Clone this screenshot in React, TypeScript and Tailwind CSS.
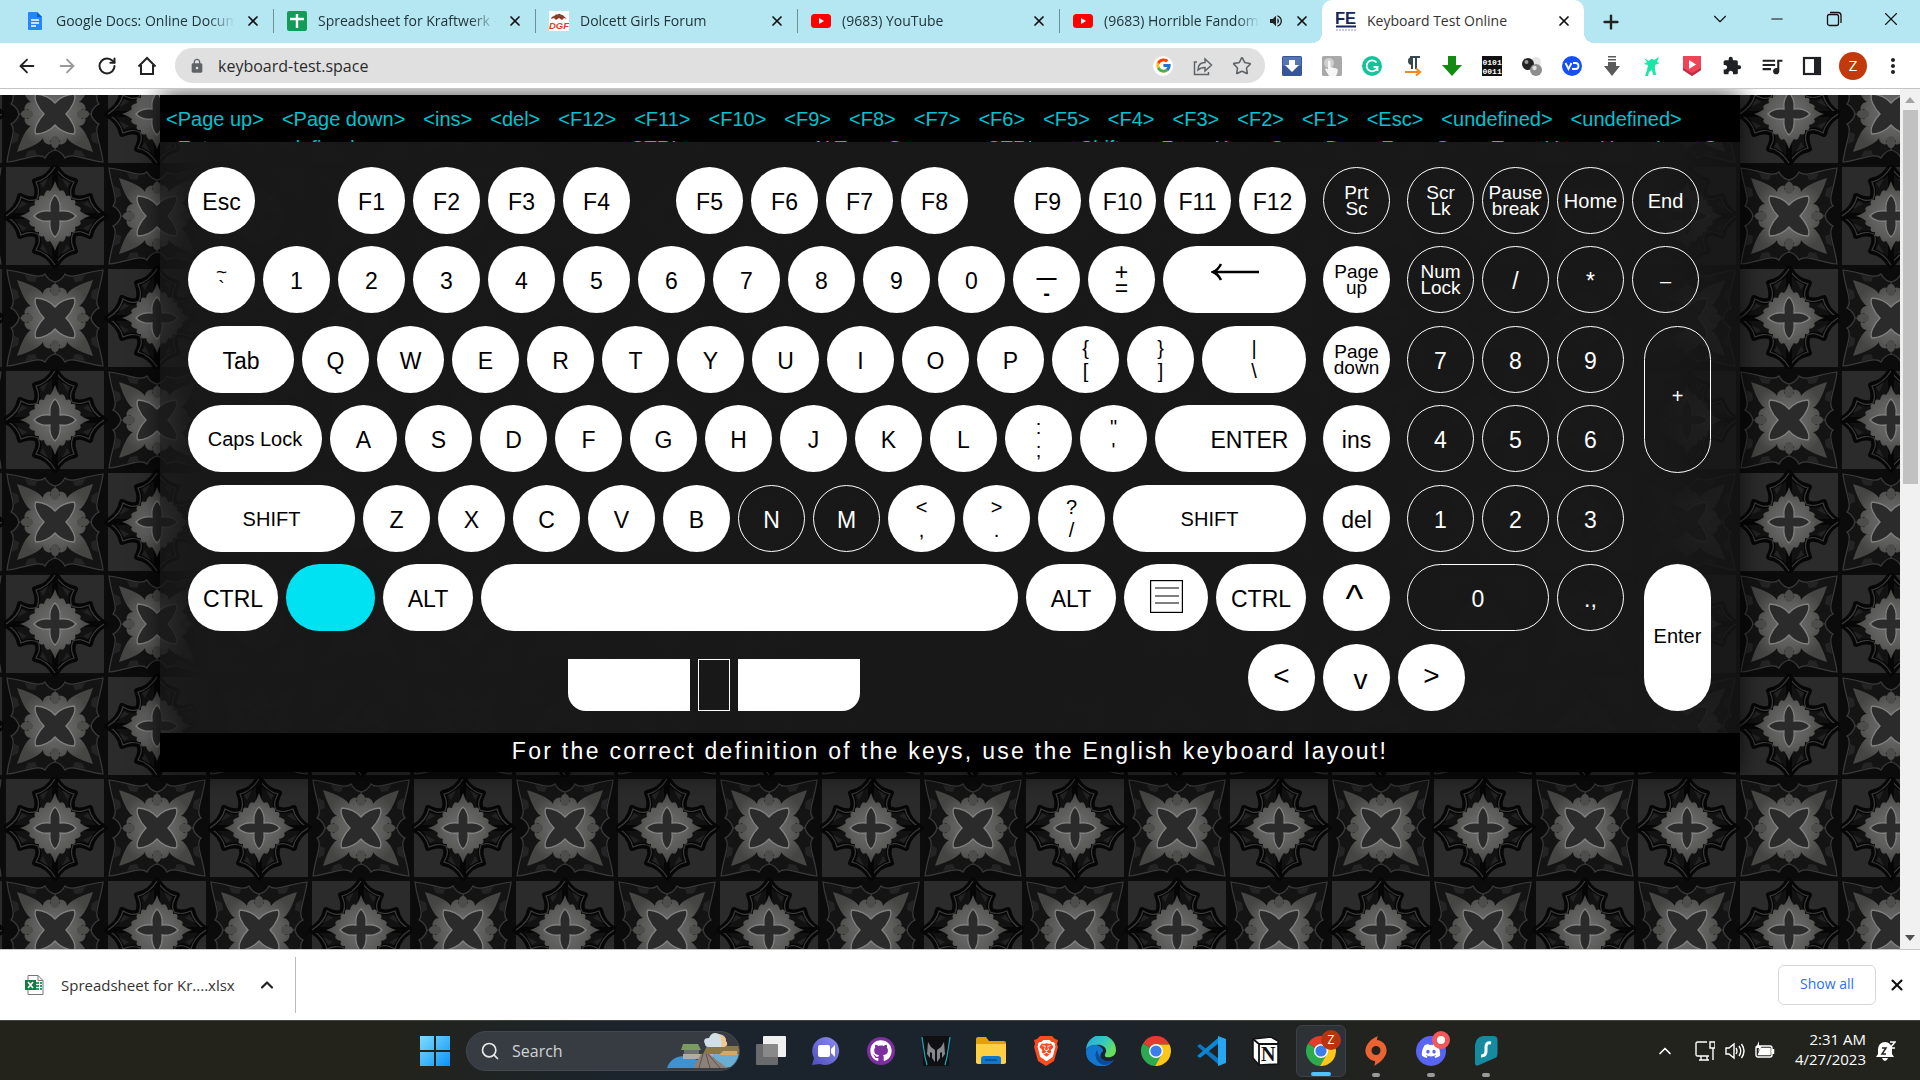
import React from "react";
import { ArrowLeft, ArrowRight, ChevronDown, ChevronUp, Minus, Plus, RotateCw, Search, Star, X } from "lucide-react";
import { FcGoogle } from "react-icons/fc";
import { FaDiscord, FaGithub } from "react-icons/fa";
import { MdExtension, MdLock, MdMoreVert, MdQueueMusic, MdVolumeUp } from "react-icons/md";
import { SiBrave } from "react-icons/si";

/* ---------- favicons ---------- */

const DocsIcon = () => (
  <svg viewBox="0 0 18 20" className="h-5 w-[18px]">
    <path d="M3 1h8l5 5v12a1 1 0 0 1-1 1H3a1 1 0 0 1-1-1V2a1 1 0 0 1 1-1z" fill="#2684fc" />
    <path d="M11 1l5 5h-5z" fill="#0f5bc9" />
    <path d="M5 9h8M5 12h8M5 15h5" stroke="#fff" strokeWidth="1.3" />
  </svg>
);
const SheetsIcon = () => (
  <svg viewBox="0 0 20 20" className="size-5">
    <rect width="20" height="20" rx="2" fill="#0f9d58" />
    <path d="M10 3v14M3 8h14" stroke="#fff" strokeWidth="2.4" />
  </svg>
);
const ForumIcon = () => (
  <svg viewBox="0 0 20 20" className="size-5">
    <rect width="20" height="20" fill="#fff" />
    <path d="M2 8c1-4 4-2 5-5 2 2 3-2 5 1 2-1 3 2 6 4l-3-1-2 2-3-2-3 2-2-2z" fill="#8a3b2c" />
    <text x="0" y="18" fontFamily="Liberation Sans" fontWeight="bold" fontStyle="italic" fontSize="9.5" fill="#e23b2e">DGF</text>
  </svg>
);
const YoutubeIcon = () => (
  <svg viewBox="0 0 20 14" className="h-3.5 w-5">
    <rect width="20" height="14" rx="3.5" fill="#f00" />
    <path d="M8 4v6l5-3z" fill="#fff" />
  </svg>
);
const FeIcon = () => (
  <svg viewBox="0 0 20 20" className="size-5">
    <text x="-1" y="13" fontFamily="Liberation Sans" fontWeight="bold" fontSize="16.5" fill="#14275a">FE</text>
    <path d="M0 15.5h20" stroke="#14275a" strokeWidth="2" />
    <path d="M0 19h20" stroke="#8c97b8" strokeWidth="1" strokeDasharray="2 1" />
  </svg>
);

type TabInfo = { title: string; icon: React.ReactNode; audio?: boolean };
const tabs: TabInfo[] = [
  { title: "Google Docs: Online Document Editor", icon: <DocsIcon /> },
  { title: "Spreadsheet for Kraftwerk - Google", icon: <SheetsIcon /> },
  { title: "Dolcett Girls Forum", icon: <ForumIcon /> },
  { title: "(9683) YouTube", icon: <YoutubeIcon /> },
  { title: "(9683) Horrible Fandoms", icon: <YoutubeIcon />, audio: true },
];

function TabStrip() {
  return (
    <div className="flex h-[43px] shrink-0 bg-[#b5e7f2] pl-3">
      {tabs.map((t, i) => (
        <div key={t.title} className="flex w-[262px] items-center pb-0.5">
          <div className={i < 4 ? "flex h-6 w-full items-center border-r border-[#6f8f97] pl-[13px] pr-3" : "flex h-6 w-full items-center pl-[13px] pr-3"}>
            <span className="flex w-5 justify-center">{t.icon}</span>
            <span className="ml-[11px] flex-1 overflow-hidden whitespace-nowrap text-sm text-[#22353a] [mask-image:linear-gradient(to_right,black_85%,transparent)]">
              {t.title}
            </span>
            {t.audio && <MdVolumeUp className="ml-2 size-4 text-[#222]" />}
            <button aria-label={"Close " + t.title} className="ml-2.5">
              <X className="size-4 text-[#111]" strokeWidth={2.6} />
            </button>
          </div>
        </div>
      ))}
      <div className="relative flex w-[262px] items-center rounded-t-[10px] bg-white pb-0.5 pl-3.5 pr-3">
        <span className="absolute -left-2.5 bottom-0 size-2.5 bg-[radial-gradient(circle_at_0_0,transparent_10px,white_10px)]" />
        <span className="absolute -right-2.5 bottom-0 size-2.5 bg-[radial-gradient(circle_at_100%_0,transparent_10px,white_10px)]" />
        <FeIcon />
        <span className="ml-[11px] flex-1 whitespace-nowrap text-sm text-[#333]">Keyboard Test Online</span>
        <button aria-label="Close tab"><X className="size-4 text-[#111]" strokeWidth={2.6} /></button>
      </div>
      <button aria-label="New tab" className="ml-4"><Plus className="size-[22px] text-[#222]" strokeWidth={2.6} /></button>
      <div className="ml-auto flex items-center gap-[35px] pb-1.5 pr-[18px] text-[#111]">
        <button aria-label="Search tabs"><ChevronDown className="size-[22px]" strokeWidth={1.2} /></button>
        <button aria-label="Minimize" className="px-0.5"><Minus className="size-[18px]" strokeWidth={1.4} /></button>
        <button aria-label="Restore" className="px-0.5">
          <svg viewBox="0 0 18 18" className="size-[18px]" fill="none" stroke="currentColor" strokeWidth="1.3">
            <rect x="2.5" y="4.5" width="11" height="11" rx="2" />
            <path d="M5 2.5h8a3 3 0 0 1 3 3V13" />
          </svg>
        </button>
        <button aria-label="Close window"><X className="size-[22px]" strokeWidth={1.2} /></button>
      </div>
    </div>
  );
}

/* ---------- toolbar ---------- */

const extensions: { name: string; art: React.ReactNode }[] = [
  { name: "Downloader", art: (<><rect x="0" y="0" width="20" height="20" rx="1.5" fill="#36559b" /><rect x="1" y="1" width="18" height="9" fill="#5574b4" /><path d="M7 4h6v5h4l-7 7-7-7h4z" fill="#fff" /></>) },
  { name: "Click tool", art: (<><rect width="20" height="20" rx="1.5" fill="#a9a9a9" /><circle cx="7" cy="7" r="5" fill="#cfcfcf" /><path d="M6 5c1-1.500 2.500-.5 2.500 1v5l6 1.500c1.500.5 1.500 2 1 4L14 20H7l-4-7c1-1 2-.5 3 .5z" fill="#f6f6f6" /></>) },
  { name: "Grammar", art: (<><circle cx="10" cy="10" r="10" fill="#15c39a" /><path d="M14.500 6.500A5.500 5.500 0 1 0 15.500 11h-4M15.500 11v4" fill="none" stroke="#fff" strokeWidth="1.800" /></>) },
  { name: "Paragraph", art: (<><path d="M8 1h10M10 1v12M14 1v12" stroke="#37474f" strokeWidth="2" /><path d="M10 1a4 4 0 1 0 0 8z" fill="#37474f" /><path d="M3 16h14M14 12.500l4 3.500-4 3.500" fill="none" stroke="#f58a1f" strokeWidth="2.200" /></>) },
  { name: "Green arrow", art: <path d="M6 0h8v9h6L10 20 0 9h6z" fill="#148a12" /> },
  { name: "Binary", art: (<><rect width="20" height="20" fill="#111" /><text x="0.500" y="9" fontFamily="Liberation Mono" fontWeight="bold" fontSize="8" fill="#fff">0101</text><text x="0.500" y="18" fontFamily="Liberation Mono" fontWeight="bold" fontSize="8" fill="#fff">0011</text></>) },
  { name: "Spheres", art: (<><circle cx="14" cy="6" r="5" fill="#e4e4e4" /><circle cx="6" cy="8" r="6" fill="#222" /><circle cx="4.500" cy="6" r="2" fill="#999" /><circle cx="14" cy="14" r="6" fill="#8d8d8d" /><circle cx="12.500" cy="12" r="2.200" fill="#ddd" /></>) },
  { name: "Video", art: (<><circle cx="10" cy="10" r="10" fill="#1450f5" /><path d="M3.500 7l3 6 3-6M11 7h2.500a3 3 0 0 1 0 6H10" fill="none" stroke="#fff" strokeWidth="1.800" /></>) },
  { name: "Grey arrow", art: (<path d="M6 0h8v1.500H6zM6 3h8v1.500H6zM6 6h8v4h4l-8 10L2 10h4z" fill="#5a5a5a" />) },
  { name: "Runner", art: (<path d="M2 2l5 3c1-2 4-3 5-1l5-3-2 5 3 1-5 2v4l1 6h-3l-1-5-3 2-1 4H3l2-6 1-5-4-1 3-2z" fill="#19e6a8" />) },
  { name: "Shield player", art: (<><path d="M1 0h18v14l-9 6-9-6z" fill="#ee4455" /><path d="M1 14l9 6 9-6v-2l-9 5-9-5z" fill="#c12d44" /><path d="M7 4v9l7-4.500z" fill="#fff" /></>) },
];

function Toolbar() {
  return (
    <div className="flex h-[46px] shrink-0 items-center border-b border-[#c4c4c4] bg-white pl-4 pr-[15px]">
      <div className="flex gap-[18px] text-[#222]">
        <button aria-label="Back"><ArrowLeft className="size-[22px]" /></button>
        <button aria-label="Forward"><ArrowRight className="size-[22px] text-[#999]" /></button>
        <button aria-label="Reload"><RotateCw className="size-[22px] p-px" strokeWidth={2.4} /></button>
        <button aria-label="Home">
          <svg viewBox="0 0 22 22" className="size-[22px]" fill="none" stroke="currentColor" strokeWidth="2"><path d="M2.500 11.500L11 3l8.500 8.500M5 10v9h12v-9" /></svg>
        </button>
      </div>
      <div className="ml-[17px] flex h-[35px] flex-1 items-center rounded-full bg-[#e0e0e0] pl-3.5 pr-[13px] text-[#5f6368]">
        <MdLock className="size-4" />
        <input aria-label="Address" defaultValue="keyboard-test.space" className="ml-[13px] min-w-0 flex-1 bg-transparent text-base text-[#2b2b2b] outline-none" />
        <span className="flex size-5 items-center justify-center rounded-full bg-white"><FcGoogle className="size-[17px]" /></span>
        <button aria-label="Share" className="ml-5">
          <svg viewBox="0 0 20 20" className="size-5" fill="none" stroke="currentColor" strokeWidth="1.500"><path d="M4 6H1.500v12.500h14V16M5 14c0-5 3-7.500 7-7.500V3l6.500 6-6.500 6v-3.500c-3 0-5 .5-7 2.500z" /></svg>
        </button>
        <button aria-label="Bookmark" className="ml-[19px]"><Star className="size-5" strokeWidth={1.900} /></button>
      </div>
      <div className="ml-[17px] flex items-center gap-5 text-[#202124]">
        {extensions.map((e) => (
          <button key={e.name} aria-label={e.name}><svg viewBox="0 0 20 20" className="size-5">{e.art}</svg></button>
        ))}
        <button aria-label="Extensions"><MdExtension className="size-5" /></button>
        <button aria-label="Media"><MdQueueMusic className="size-5 scale-125" /></button>
        <button aria-label="Side panel">
          <svg viewBox="0 0 20 20" className="size-5"><rect x="2" y="2" width="16" height="16" fill="none" stroke="currentColor" strokeWidth="2.200" /><rect x="12" y="2" width="6" height="16" fill="currentColor" /></svg>
        </button>
      </div>
      <button aria-label="Profile" className="ml-[17px] flex size-7 items-center justify-center rounded-full bg-[#c23a0c] text-[15px] text-white">Z</button>
      <button aria-label="Menu" className="ml-3.5"><MdMoreVert className="size-6 text-[#202124]" /></button>
    </div>
  );
}

/* ---------- tiled backdrop ---------- */

const quarter = [0, 90, 180, 270];

function Backdrop() {
  return (
    <svg className="absolute inset-x-0 bottom-0 top-1.5 h-[calc(100%-6px)] w-full" aria-hidden="true">
      <defs>
        <radialGradient id="glow"><stop offset="0" stopColor="#707070" /><stop offset="0.6" stopColor="#5c5c5b" /><stop offset="1" stopColor="#454544" /></radialGradient>
        <g id="plusCell">
          <rect x="-51" y="-51" width="102" height="102" fill="#2b2b2b" stroke="#0c0c0c" strokeWidth="4" />
          {quarter.map((r) => (
            <g key={r} transform={`rotate(${r})`}>
              <path d="M0 0L0-50C5-42 10-37 20-35C17-29 15-24 18-19C24-16 30-18 35-20C37-10 42-5 50 0Z" fill="#121212" stroke="#060606" strokeWidth="6" strokeLinejoin="round" />
              <path d="M0-49C5-41 10-36 19-34C16-28 14-24 17-18C24-15 29-17 34-19C36-10 41-5 49 0" fill="none" stroke="#3a3a3a" strokeWidth="1.200" />
              <path d="M7-38L15-33L12-28ZM38-7L33-15L28-12Z" fill="#222" />
            </g>
          ))}
          <path d="M0-35C2-30 3-27 5-25Q9-28 11-20Q17-22 16-16Q22-17 20-11Q28-9 25-5C27-3 30-2 35 0C30 2 27 3 25 5Q28 9 20 11Q22 17 16 16Q17 22 11 20Q9 28 5 25C3 27 2 30 0 35C-2 30-3 27-5 25Q-9 28-11 20Q-17 22-16 16Q-22 17-20 11Q-28 9-25 5C-27 3-30 2-35 0C-30-2-27-3-25-5Q-28-9-20-11Q-22-17-16-16Q-17-22-11-20Q-9-28-5-25C-3-27-2-30 0-35Z" fill="url(#glow)" />
          <path d="M0-21C4-18 6-11 5-5C11-6 18-4 21 0C18 4 11 6 5 5C6 11 4 18 0 21C-4 18-6 11-5 5C-11 6-18 4-21 0C-18-4-11-6-5-5C-6-11-4-18 0-21Z" fill="#2b2b2b" stroke="#808080" strokeWidth="1.300" />
        </g>
        <g id="crossCell">
          <rect x="-51" y="-51" width="102" height="102" fill="#0b0b0b" />
          {quarter.map((r) => (
            <g key={r} transform={`rotate(${r})`}>
              <path d="M0 0L0-36C4-37 8-40 10-44C16-38 30-46 48-48C46-30 38-16 44-10C40-8 37-4 36 0Z" fill="#141414" stroke="#3a3a3a" strokeWidth="1.200" />
              <path d="M18-41L30-43L27-37L20-36ZM41-18L43-30L37-27L36-20Z" fill="#242424" />
            </g>
          ))}
          <path d="M0-24Q3-24 5-27Q2-32 8-30Q12-28 12-24Q16-31 38-38Q31-16 24-12Q28-12 30-8Q32-2 27-5Q24-3 24 0Q24 3 27 5Q32 2 30 8Q28 12 24 12Q31 16 38 38Q16 31 12 24Q12 28 8 30Q2 32 5 27Q3 24 0 24Q-3 24-5 27Q-2 32-8 30Q-12 28-12 24Q-16 31-38 38Q-31 16-24 12Q-28 12-30 8Q-32 2-27 5Q-24 3-24 0Q-24-3-27-5Q-32-2-30-8Q-28-12-24-12Q-31-16-38-38Q-16-31-12-24Q-12-28-8-30Q-2-32-5-27Q-3-24 0-24Z" fill="url(#glow)" />
          {quarter.map((r) => (
            <path key={r} transform={`rotate(${r})`} d="M0-22C4-22 5-26 4-30Q3-34 0-34Q-3-34-4-30C-5-26-4-22 0-22Z" fill="#4d4d4c" />
          ))}
          <path d="M0-11C4-16 12-20 19-20C22-16 17-6 11 0C17 6 22 16 19 20C12 20 4 16 0 11C-4 16-12 20-19 20C-22 16-17 6-11 0C-17-6-22-16-19-20C-12-20-4-16 0-11Z" fill="#2b2b2b" stroke="#808080" strokeWidth="1.300" />
        </g>
        <pattern id="tiles" x="4" y="70" width="204" height="204" patternUnits="userSpaceOnUse">
          <use href="#crossCell" x="153" y="51" />
          <use href="#crossCell" x="51" y="153" />
          <use href="#plusCell" x="51" y="51" />
          <use href="#plusCell" x="153" y="153" />
        </pattern>
      </defs>
      <rect width="100%" height="100%" fill="url(#tiles)" />
    </svg>
  );
}

/* ---------- keyboard ---------- */

type KeyProps = { w?: string; h?: string; off?: boolean; size?: string; pad?: string; label?: string; children?: React.ReactNode };
function Key({ w = "w-[67px]", h = "h-[67px]", off, size = "text-[23px]", pad = "pt-[3px]", label, children }: KeyProps) {
  const tone = off ? "border border-white text-white" : "bg-white text-black";
  return (
    <button aria-label={label} className={`flex shrink-0 items-center justify-center rounded-full text-center ${w} ${h} ${size} ${pad} ${tone}`}>
      {children}
    </button>
  );
}

const Letters = ({ keys }: { keys: string[] }) => (<>{keys.map((k) => <Key key={k} off={k === "N" || k === "M"}>{k}</Key>)}</>);

function Pair({ a, b, w, tight, off, label }: { a: string; b: string; w?: string; tight?: boolean; off?: boolean; label?: string }) {
  return (
    <Key w={w} off={off} size={tight ? "text-[19px] leading-4" : "text-xl leading-[23px]"} pad="p-0" label={label}>
      <span>{a}<br />{b}</span>
    </Key>
  );
}

function Row({ main, nav, pad, gap = "mt-3" }: { main: React.ReactNode; nav: React.ReactNode; pad: React.ReactNode; gap?: string }) {
  return (
    <div className={`flex ${gap}`}>
      <div className="flex w-[1118px] gap-2">{main}</div>
      <div className="ml-[17px]">{nav}</div>
      <div className="ml-[17px] flex gap-2">{pad}</div>
    </div>
  );
}

function Keyboard() {
  return (
    <div className="flex gap-2 pb-[22px] pl-7 pt-[25px]">
      <div className="flex flex-col">
        <Row
          gap="mt-0"
          main={
            <>
              <Key>Esc</Key>
              <div className="ml-[75px] flex gap-2"><Letters keys={["F1", "F2", "F3", "F4"]} /></div>
              <div className="mx-auto flex gap-2"><Letters keys={["F5", "F6", "F7", "F8"]} /></div>
              <div className="flex gap-2"><Letters keys={["F9", "F10", "F11", "F12"]} /></div>
            </>
          }
          nav={<Pair a="Prt" b="Sc" tight off />}
          pad={<><Pair a="Scr" b="Lk" tight off /><Pair a="Pause" b="break" tight off /><Key off size="text-xl" pad="p-0">Home</Key></>}
        />
        <Row
          main={
            <>
              <Pair a="~" b="`" tight />
              <Letters keys={["1", "2", "3", "4", "5", "6", "7", "8", "9", "0"]} />
              <Key size="text-xl leading-4" pad="pt-2.5" label="Minus"><b>—<br />-</b></Key>
              <Key size="text-[23px] leading-4" pad="p-0"><span>+<br />=</span></Key>
              <Key w="flex-1" label="Backspace" pad="pb-4">
                <svg viewBox="0 0 48 18" className="h-[18px] w-12" fill="none" stroke="currentColor" strokeWidth="2.500"><path d="M48 9H2M10 1Q7 7 2 9Q7 11 10 17" /></svg>
              </Key>
            </>
          }
          nav={<Pair a="Page" b="up" tight />}
          pad={<><Pair a="Num" b="Lock" tight off /><Key off>/</Key><Key off>*</Key></>}
        />
        <Row
          gap="mt-[13px]"
          main={
            <>
              <Key w="w-[106px]">Tab</Key>
              <Letters keys={["Q", "W", "E", "R", "T", "Y", "U", "I", "O", "P"]} />
              <Pair a="{" b="[" /><Pair a="}" b="]" /><Pair a="|" b="\" w="flex-1" />
            </>
          }
          nav={<Pair a="Page" b="down" tight />}
          pad={<><Key off>7</Key><Key off>8</Key><Key off>9</Key></>}
        />
        <Row
          main={
            <>
              <Key w="w-[134px]" size="text-xl" pad="p-0">Caps Lock</Key>
              <Letters keys={["A", "S", "D", "F", "G", "H", "J", "K", "L"]} />
              <Pair a=":" b=";" /><Pair a={'"'} b="'" />
              <Key w="flex-1" pad="pl-[38px] pt-[3px]">ENTER</Key>
            </>
          }
          nav={<Key>ins</Key>}
          pad={<><Key off>4</Key><Key off>5</Key><Key off>6</Key></>}
        />
        <Row
          gap="mt-[13px]"
          main={
            <>
              <Key w="w-[167px]" size="text-xl" pad="p-0">SHIFT</Key>
              <Letters keys={["Z", "X", "C", "V", "B", "N", "M"]} />
              <Pair a="<" b="," /><Pair a=">" b="." /><Pair a="?" b="/" />
              <Key w="flex-1" size="text-xl" pad="p-0">SHIFT</Key>
            </>
          }
          nav={<Key>del</Key>}
          pad={<><Key off>1</Key><Key off>2</Key><Key off>3</Key></>}
        />
        <Row
          main={
            <>
              <Key w="w-[90px]">CTRL</Key>
              <button aria-label="Windows" className="h-[67px] w-[89px] rounded-full bg-[#00e2f2]" />
              <Key w="w-[90px]">ALT</Key>
              <Key w="flex-1" label="Space" />
              <Key w="w-[90px]">ALT</Key>
              <Key w="w-[84px]" label="Menu" pad="pb-0.5">
                <svg viewBox="0 0 33 33" className="size-[33px]" fill="none" stroke="currentColor" strokeWidth="1.200"><rect x="0.600" y="0.600" width="31.800" height="31.800" /><path d="M5 8h24M5 16h24M5 23h24" /></svg>
              </Key>
              <Key w="w-[90px]">CTRL</Key>
            </>
          }
          nav={<Key size="text-[38px] leading-none" pad="pt-[3px] pr-1">^</Key>}
          pad={<><Key w="w-[142px]" off>0</Key><Key off>.,</Key></>}
        />
        <div className="mt-[13px] flex items-end pl-[380px] pr-[159px]">
          <div className="flex gap-2">
            <button aria-label="Left button" className="h-[52px] w-[122px] rounded-bl-[18px] bg-white" />
            <button aria-label="Wheel" className="h-[52px] w-8 border border-white" />
            <button aria-label="Right button" className="h-[52px] w-[122px] rounded-br-[18px] bg-white" />
          </div>
          <div className="ml-auto flex gap-2">
            <Key size="text-[28px]" pad="pb-1">&lt;</Key>
            <Key size="text-[28px]" pad="pl-2 pt-1">v</Key>
            <Key size="text-[28px]" pad="pb-1">&gt;</Key>
          </div>
        </div>
      </div>
      <div className="flex w-[79px] flex-col">
        <Key off size="text-xl" pad="p-0">End</Key>
        <div className="mt-3"><Key off size="text-xl">–</Key></div>
        <div className="mt-[13px] self-end"><Key off h="h-[147px]" size="text-xl" pad="pb-2">+</Key></div>
        <div className="mt-[91px] self-end"><Key h="h-[147px]" size="text-xl" pad="pb-1">Enter</Key></div>
      </div>
    </div>
  );
}

const recent = ["Page up", "Page down", "ins", "del", "F12", "F11", "F10", "F9", "F8", "F7", "F6", "F5", "F4", "F3", "F2", "F1", "Esc", "undefined", "undefined"];
const older: [string, string][] = [
  ["Enter", ""], ["undefined", ""], ["CTRL", "ml-[234px]"], ["ALT", "ml-[88px]"], ["Space", ""], ["CTRL", ""], ["Shift", ""],
  ["Z", ""], ["X", ""], ["C", ""], ["D", ""], ["F", ""], ["G", ""], ["T", ""], ["Y", ""], ["U", ""], ["I", ""], ["O", ""],
];

function Page() {
  return (
    <div className="relative flex min-h-0 flex-1 overflow-hidden bg-white">
      <main className="relative min-w-0 flex-1 overflow-hidden pt-1.5 font-['Liberation_Sans',Arial,sans-serif]">
        <Backdrop />
        <div className="relative mx-auto w-[1580px] shadow-[0_0_24px_rgba(0,0,0,0.75)]">
          <div className="h-[47px] overflow-hidden whitespace-nowrap bg-black pl-1.5 pt-2.5 text-xl leading-[29px] text-[#00c3cf]">
            <div className="flex gap-[18px]">{recent.map((k, i) => <span key={i}>{"<" + k + ">"}</span>)}</div>
            <div className="flex gap-[18px]">{older.map(([k, m], i) => <span key={i} className={m}>{"<" + k + ">"}</span>)}</div>
          </div>
          <div className="bg-[linear-gradient(to_right,rgba(22,22,22,0.75),rgba(24,24,24,0.98)_40px,rgb(24,24,24)_50%,rgba(24,24,24,0.98)_calc(100%-70px),rgba(20,20,20,0.8))]">
            <Keyboard />
          </div>
          <p className="bg-black pb-[3px] text-center text-[23px] leading-9 tracking-widest text-white">
            For the correct definition of the keys, use the English keyboard layout!
          </p>
        </div>
      </main>
      <div className="flex w-5 shrink-0 flex-col items-center bg-[#f1f1f1] py-2">
        <svg viewBox="0 0 10 6" className="h-1.5 w-2.5"><path d="M0 6l5-6 5 6z" fill="#a3a3a3" /></svg>
        <div className="mt-[7px] h-[374px] w-[15px] bg-[#c1c1c1]" />
        <svg viewBox="0 0 10 6" className="mt-auto h-1.5 w-2.5"><path d="M0 0l5 6 5-6z" fill="#505050" /></svg>
      </div>
    </div>
  );
}

/* ---------- download shelf ---------- */

function Downloads() {
  return (
    <div className="flex h-[71px] shrink-0 items-center border-t border-[#c8c8c8] bg-white">
      <div className="flex h-14 items-center border-r border-[#bbb] pl-[25px] pr-[18px]">
        <svg viewBox="0 0 20 20" className="size-5">
          <path d="M3 .5h10l5 5v14H3z" fill="#fff" stroke="#777" />
          <path d="M13 .5v5h5" fill="none" stroke="#777" />
          <path d="M11 8h3M15 8h2M11 11h3M15 11h2M11 14h3M15 14h2" stroke="#21a366" strokeWidth="1.800" />
          <rect y="5" width="11" height="10" fill="#107c41" />
          <path d="M3 7l5 6M8 7l-5 6" stroke="#fff" strokeWidth="1.600" />
        </svg>
        <span className="ml-4 w-[176px] whitespace-nowrap text-[15px] text-[#333]">Spreadsheet for Kr....xlsx</span>
        <button aria-label="File options" className="ml-5"><ChevronUp className="size-5 text-[#222]" strokeWidth={2.600} /></button>
      </div>
      <button className="ml-auto h-10 w-[98px] rounded-md border border-[#d5d7da] pb-0.5 text-sm font-medium text-[#2a6fee]">Show all</button>
      <button aria-label="Close downloads" className="ml-3 mr-3.5"><X className="size-[18px] text-[#111]" strokeWidth={2.800} /></button>
    </div>
  );
}

/* ---------- taskbar ---------- */

const ChromeLogo = () => (
  <svg viewBox="0 0 30 30" className="size-[30px]">
    <path d="M15 15L2 7.500A15 15 0 0 1 28 7.500L28.500 8.500H15z" fill="#e33b2e" />
    <path d="M15 15L2 7.500A15 15 0 0 0 14 30L21 19z" fill="#2da94f" />
    <path d="M15 8.500H28.500A15 15 0 0 1 14 30L21 18z" fill="#fdc61a" />
    <circle cx="15" cy="15" r="7" fill="#fff" />
    <circle cx="15" cy="15" r="5.600" fill="#3b7ded" />
  </svg>
);

const apps: { name: string; art: React.ReactNode }[] = [
  { name: "Task view", art: <svg viewBox="0 0 30 30" className="size-[30px]"><rect x="7" y="0" width="23" height="21" rx="1" fill="#f0f0f0" /><rect x="0" y="8" width="22" height="21" rx="1" fill="#777" fillOpacity="0.850" /></svg> },
  { name: "Chat", art: <svg viewBox="0 0 30 30" className="size-[30px]"><defs><linearGradient id="chat" x1="0" y1="1" x2="1" y2="0"><stop offset="0" stopColor="#4e4fb8" /><stop offset="1" stopColor="#8d8df0" /></linearGradient></defs><path d="M15 1a14 14 0 1 1-6 27L1 29l2-7A14 14 0 0 1 15 1z" fill="url(#chat)" /><rect x="7" y="9" width="12" height="12" rx="2" fill="#fff" /><path d="M20 13l4-4v12l-4-4z" fill="#fff" /></svg> },
  { name: "GitHub", art: <span className="flex size-7 items-center justify-center rounded-full bg-[#7d2fa0]"><FaGithub className="size-[22px] text-white" /></span> },
  { name: "Predator", art: <svg viewBox="0 0 30 30" className="size-[30px]"><path d="M2 0h26v30H2z" fill="#101012" /><path d="M1 1l3 20 2 8M29 1l-3 20-2 8" fill="none" stroke="#19a9bd" strokeWidth="1.200" /><path d="M7 6l3 5 4 3v12l-3-4v-5l-2-1v6l-3-4zM23 6l-3 5-4 3v12l3-4v-5l2-1v6l3-4z" fill="#85888d" /></svg> },
  { name: "Explorer", art: <svg viewBox="0 0 30 30" className="size-[30px]"><path d="M0 3q0-2 2-2h8l3 4h15q2 0 2 2v20H0z" fill="#e3a008" /><path d="M0 8h30v18q0 2-2 2H2q-2 0-2-2z" fill="#ffcf44" /><path d="M5 28v-5q0-3 3-3h14q3 0 3 3v5z" fill="#0f79cf" /><path d="M9 24h12" stroke="#0a4d8c" strokeWidth="1.500" /></svg> },
  { name: "Brave", art: <span className="relative flex size-[30px] items-center justify-center"><svg viewBox="0 0 30 30" className="absolute size-[30px]"><path d="M9 0h12l3 3 3 1-1 4 1 3-4 14-8 5-8-5L3 11l1-3-1-4 3-1z" fill="#fb4b1e" /></svg><SiBrave className="relative size-[21px] text-white" /></span> },
  { name: "Edge", art: <svg viewBox="0 0 30 30" className="size-[30px]"><defs><linearGradient id="edge" x1="0" y1="0" x2="1" y2="0.500"><stop offset="0" stopColor="#2aa7df" /><stop offset="0.600" stopColor="#35c9c0" /><stop offset="1" stopColor="#67e05a" /></linearGradient></defs><path d="M0 14A15 15 0 0 1 30 14c0 6-5 8-10 7-2-1-1-3 0-5 1-5-5-8-10-7C5 9 1 11 0 14z" fill="url(#edge)" /><path d="M0 15C1 10 8 7 13 10c4 2 5 5 3 6-4 4 0 11 7 10 2 0 4-1 5-2-6 9-18 7-22 3C1 24 0 19 0 15z" fill="#1177cf" /><path d="M11 14c-4 7 1 15 9 15 4-1 7-3 8-5-7 3-15 0-17-10z" fill="#0c4a9a" /></svg> },
  { name: "Chrome", art: <ChromeLogo /> },
  { name: "VS Code", art: <svg viewBox="0 0 30 30" className="size-[30px]"><path d="M1 10l3-2 19 15v6z" fill="#0f75bd" /><path d="M1 20l3 2L23 7V1z" fill="#0d86d4" /><path d="M22 0l8 3v24l-8 3z" fill="#27a7f2" /></svg> },
  { name: "Notion", art: <svg viewBox="0 0 30 30" className="size-[30px]"><path d="M2 3l18-2 7 4v23l-19 1-6-7z" fill="#fff" stroke="#111" strokeWidth="1.500" /><path d="M2 3l6 5h19M8 8v21" fill="none" stroke="#111" strokeWidth="1.800" /><text x="10" y="25" fontFamily="Liberation Serif" fontWeight="bold" fontSize="20" fill="#111">N</text></svg> },
];

function Taskbar() {
  return (
    <div className="flex h-[60px] shrink-0 items-center border-t border-[#40423c] bg-[linear-gradient(to_right,#23231b_0,#23231b_20%,#1b242c_32%,#1b232d_55%,#22231e_72%,#22231c_100%)] pr-6 text-white">
      <div className="flex flex-1 items-center pl-[420px]">
        <button aria-label="Start">
          <svg viewBox="0 0 30 30" className="size-[30px]"><defs><linearGradient id="win" x1="0" y1="0" x2="1" y2="1"><stop offset="0" stopColor="#7fdcff" /><stop offset="1" stopColor="#0b93f5" /></linearGradient></defs><path d="M0 0h14v14H0zM16 0h14v14H16zM0 16h14v14H0zM16 16h14v14H16z" fill="url(#win)" /></svg>
        </button>
        <label className="ml-4 flex h-10 w-[274px] items-center overflow-hidden rounded-full border border-[#42484d] bg-[#363c41] pl-[13px]">
          <Search className="size-5 text-[#e8e8e8]" />
          <input aria-label="Search" placeholder="Search" className="ml-3 min-w-0 flex-1 bg-transparent text-base text-[#d0d3d5] outline-none placeholder:text-[#d0d3d5]" />
          <svg viewBox="0 0 72 38" className="h-[38px] w-[72px]">
            <path d="M44 22h28v10q-8 4-18 4z" fill="#6aaed3" />
            <path d="M40 14h32v8H36z" fill="#8b7747" />
            <path d="M56 19h14v4H52z" fill="#d6a862" />
            <path d="M0 36q4-12 18-12 14 2 20 12z" fill="#3f92d2" />
            <path d="M38 12q-3-6 4-6 3-7 10-4 7 1 6 6 5 6-4 7H42q-4 0-4-3z" fill="#cfe0e6" />
            <path d="M52 3q8 1 7 6 4 6-5 6 2-6-2-12z" fill="#f1c88f" />
            <path d="M16 12h15l3 6H14z" fill="#7c9b62" />
            <path d="M17 18h15v7H17z" fill="#6f7072" />
            <path d="M16 22h30v5H16z" fill="#b3aaa2" />
            <path d="M34 22h8l18 14H26z" fill="#8d8079" />
            <path d="M36 22L32 36M39 22l4 14M41 22l12 14" stroke="#5d524d" strokeWidth="1" />
          </svg>
        </label>
        <div className="ml-4 flex items-center gap-[25px]">
          {apps.map((a) => <button key={a.name} aria-label={a.name} className="flex w-[30px] justify-center">{a.art}</button>)}
        </div>
        <button aria-label="Chrome profile" className="relative ml-[15px] flex h-[52px] w-[50px] items-center justify-center rounded-md border border-[#3c4146] bg-[#2d3237]">
          <ChromeLogo />
          <span className="absolute right-1 top-1 flex size-5 items-center justify-center rounded-full bg-[#b9340c] text-xs">Z</span>
          <span className="absolute bottom-0 h-1 w-5 rounded-full bg-[#4cc2ff]" />
        </button>
        <div className="ml-[15px] flex items-center gap-[25px]">
          <button aria-label="Origin" className="relative flex h-[52px] w-[30px] items-center justify-center">
            <svg viewBox="0 0 30 30" className="size-[30px]"><path fillRule="evenodd" d="M17 0c-1 2-1 3-1 4a10.500 10.500 0 0 1 8 16c-2 4-6 7-11 10 1-2 1-3 1-5A10.500 10.500 0 0 1 6 9c2-4 6-7 11-9zM15 10a4.500 4.500 0 1 0 0 9 4.500 4.500 0 0 0 0-9z" fill="#ec6333" /></svg>
            <span className="absolute bottom-0 h-1 w-2 rounded-full bg-[#9a9a9a]" />
          </button>
          <button aria-label="Discord" className="relative flex h-[52px] w-[30px] items-center justify-center">
            <span className="flex size-[30px] items-center justify-center rounded-full bg-[#5865f2]"><FaDiscord className="size-5" /></span>
            <span className="absolute -right-1 top-1.5 size-[18px] rounded-full border-[5px] border-[#f0585c] bg-white" />
            <span className="absolute bottom-0 h-1 w-2 rounded-full bg-[#9a9a9a]" />
          </button>
          <button aria-label="Surfshark" className="relative flex h-[52px] w-[30px] items-center justify-center">
            <svg viewBox="0 0 30 30" className="size-[30px]"><path d="M12 0h10q5 0 4.500 5v13q0 3-2.500 4L8 29q-4 2-4-2V9Q5 1 12 0z" fill="#168ba0" /><path d="M20 7q-5-1-5 4v4q0 5-5 5" fill="none" stroke="#fff" strokeWidth="3" /></svg>
            <span className="absolute bottom-0 h-1 w-2 rounded-full bg-[#9a9a9a]" />
          </button>
        </div>
      </div>
      <button aria-label="Hidden icons"><ChevronUp className="size-5" strokeWidth={2} /></button>
      <div className="ml-5 flex items-center gap-2.5">
        <svg viewBox="0 0 20 20" className="size-5" fill="none" stroke="currentColor" strokeWidth="1.400"><path d="M12 1H2.500Q1 1 1 2.500v11Q1 15 2.500 15H14M4 19h10M6 15v4M12 15v4M18 7v12M15 1h5v6h-5z" /></svg>
        <svg viewBox="0 0 20 20" className="size-5" fill="none" stroke="currentColor" strokeWidth="1.400"><path d="M1 7h3l5-4v14l-5-4H1zM11 7q2 3 0 6M14 5q3.500 5 0 10M16.500 3q5 7 0 14" /></svg>
        <svg viewBox="0 0 20 20" className="size-5" fill="none" stroke="currentColor" strokeWidth="1.400"><rect x="1" y="5" width="16" height="11" rx="2" /><path d="M6 7.500h9v6H3.500z" fill="currentColor" /><path d="M18 8v5" strokeWidth="2.500" /><path d="M4 0L1 7h3l-1 4 4-6H4z" fill="currentColor" stroke="none" /></svg>
      </div>
      <div className="ml-5 pb-1 text-right text-[15px] leading-5">2:31 AM<br />4/27/2023</div>
      <svg viewBox="0 0 20 22" className="ml-2.5 h-[22px] w-5"><path d="M9 2a7 7 0 0 1 7 7v5l2 3H0l2-3V9a7 7 0 0 1 7-7zM6 18h6q-1 3-3 3t-3-3z" fill="#fff" /><path d="M6 8h4l-4 6h4" fill="none" stroke="#22231c" strokeWidth="1.500" /><path d="M14 2h5l-5 6h5" fill="none" stroke="#fff" strokeWidth="1.500" /></svg>
    </div>
  );
}

export default function App() {
  return (
    <div className="flex h-screen flex-col overflow-hidden font-['Open_Sans','Noto_Sans',sans-serif]">
      <TabStrip />
      <Toolbar />
      <Page />
      <Downloads />
      <Taskbar />
    </div>
  );
}
